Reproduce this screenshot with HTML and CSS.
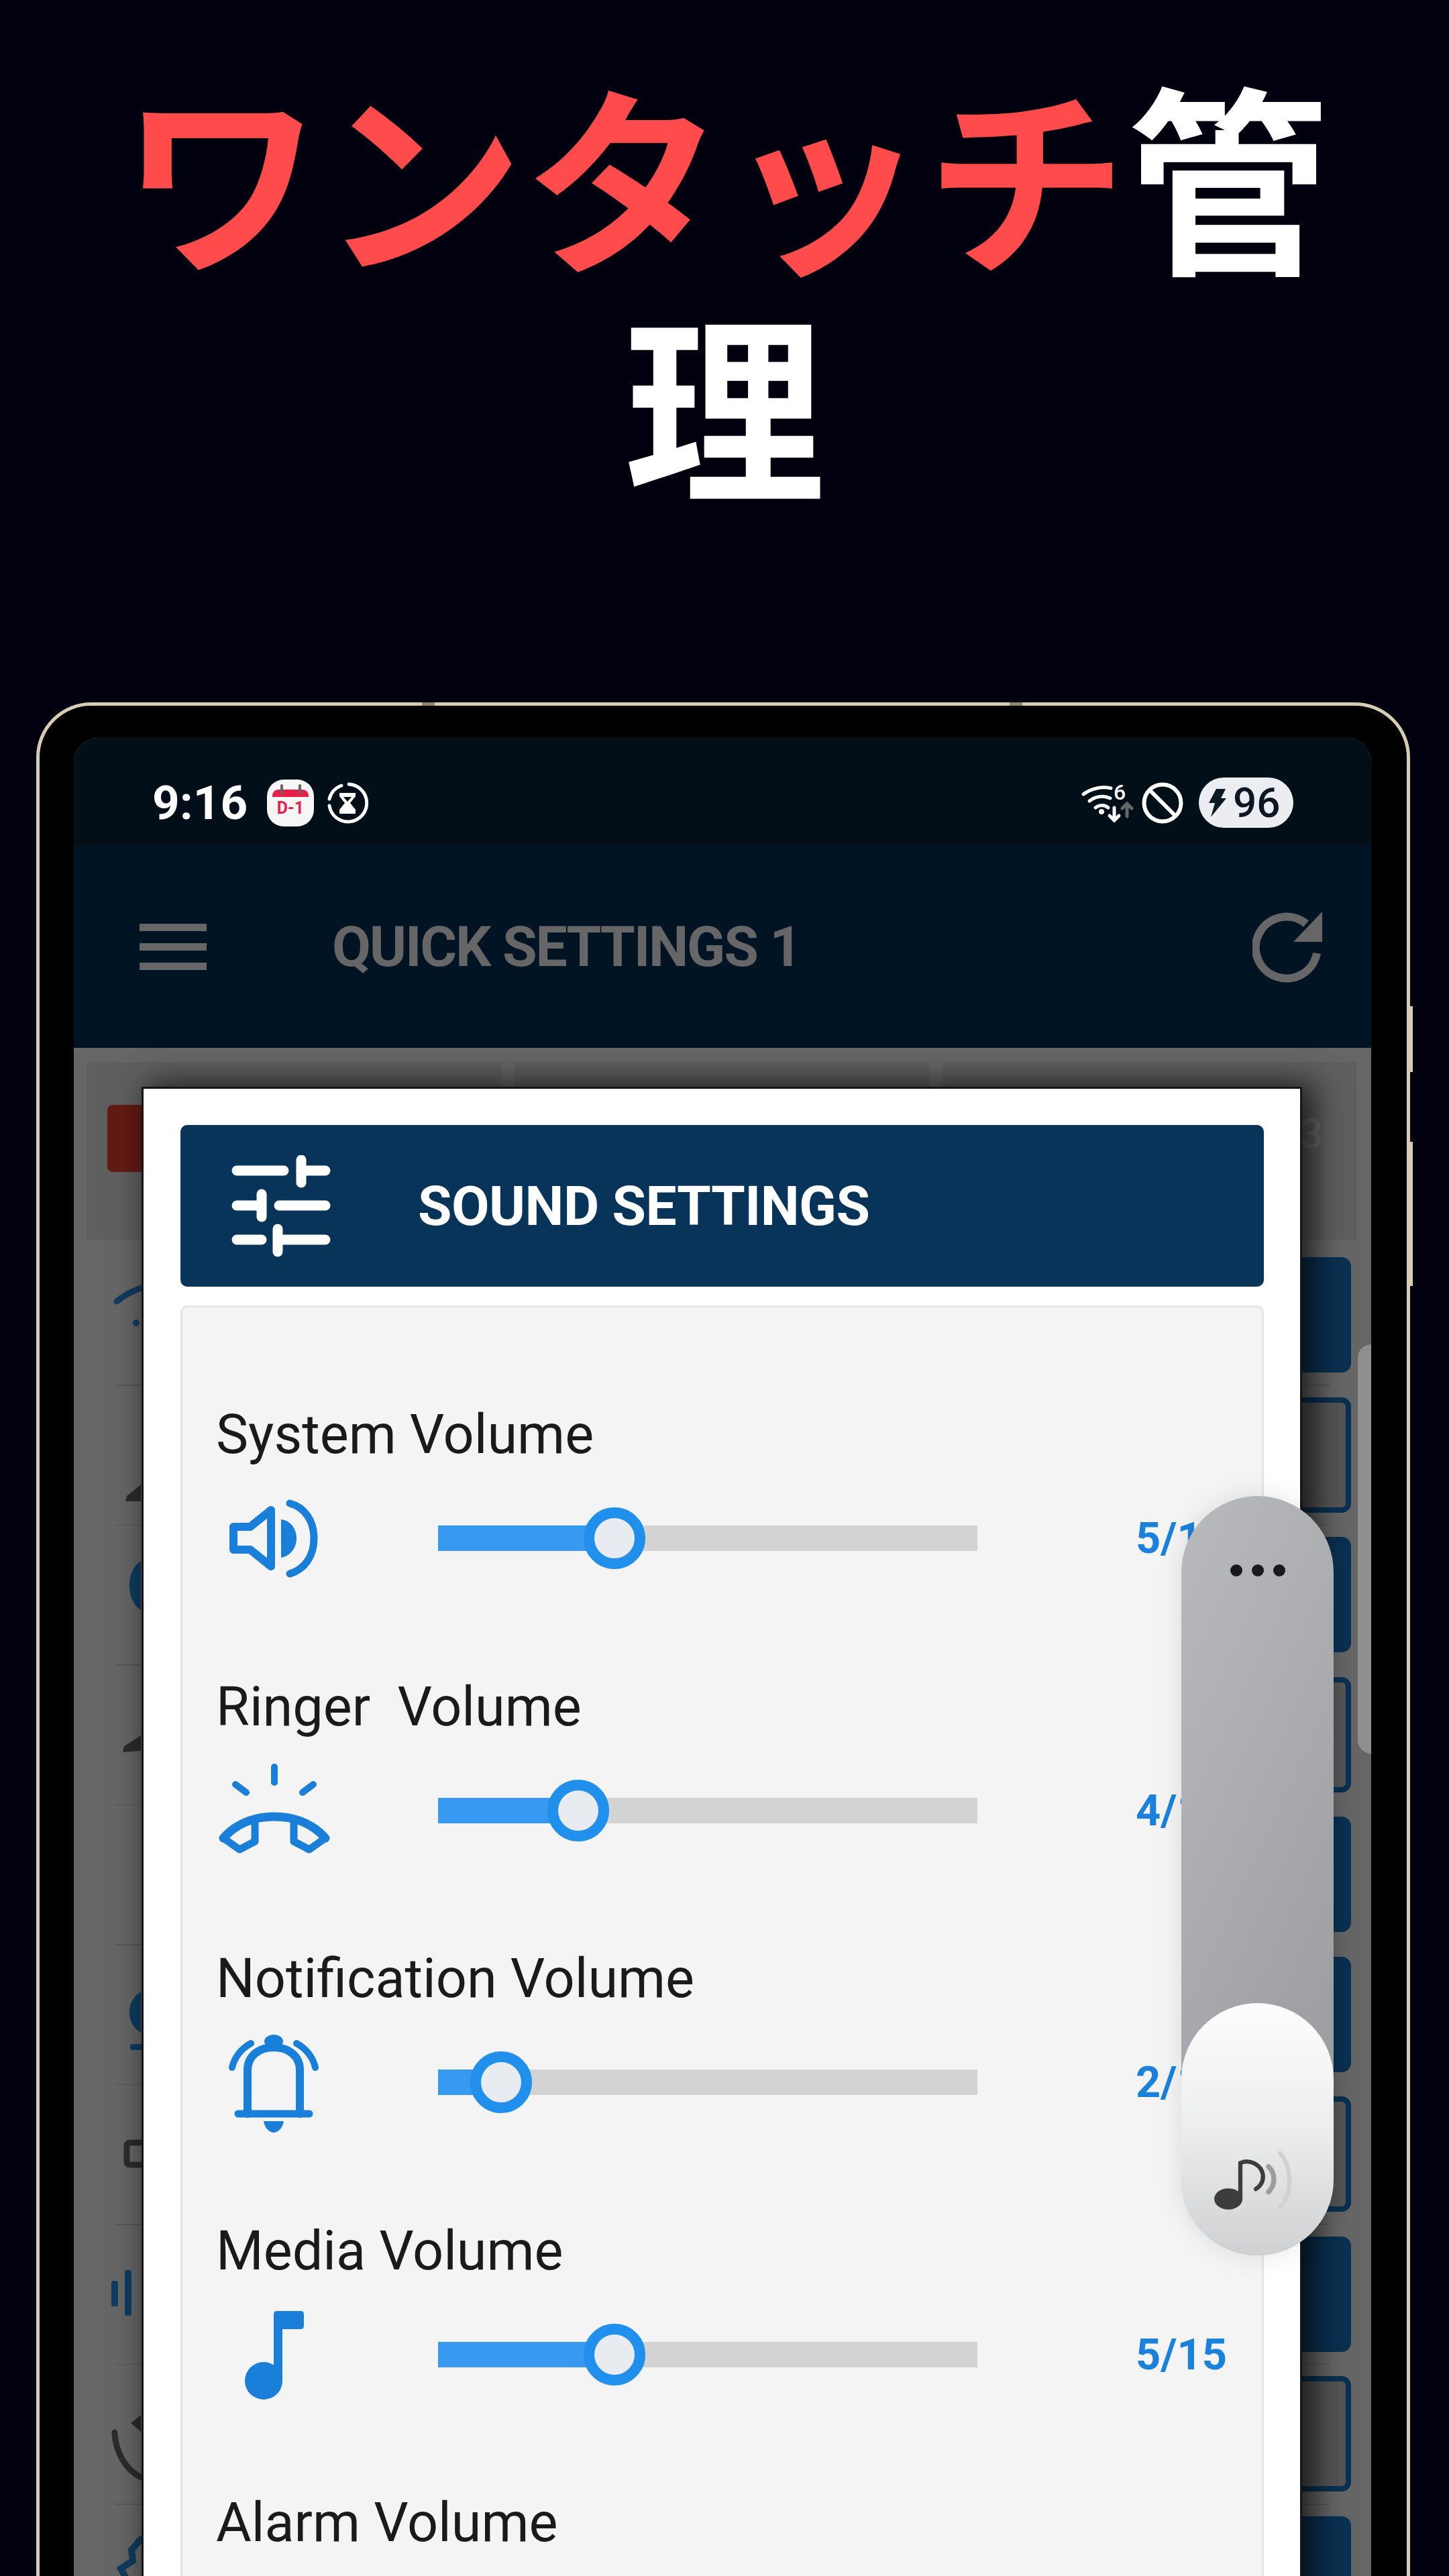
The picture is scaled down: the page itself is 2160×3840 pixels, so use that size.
FILE: index.html
```html
<!DOCTYPE html>
<html lang="ja">
<head>
    <meta charset="UTF-8">
    <title>ワンタッチ管理</title>
    <link rel="stylesheet" href="styles.css">
</head>
<body>
    <h1 class="headline"><span class="headline-red">ワンタッチ</span>管<br>理</h1>

    <div class="phone">
        <span class="seam seam-left"></span>
        <span class="seam seam-right"></span>
        <span class="side-key side-key-top"></span>
        <span class="side-key side-key-bottom"></span>

        <div class="screen">
            <div class="statusbar">
                <div class="status-left">
                    <span class="clock">9:16</span>
                    <svg class="ic-calendar" viewBox="0 0 70 70">
                        <rect x="0" y="0" width="70" height="70" rx="25" fill="#f6f6f6"/>
                        <path d="M8 26 V24 C8 19 12 15 17 15 H53 C58 15 62 19 62 24 V26 Z" fill="#ea1f49"/>
                        <path d="M22 9 V20 M49 9 V20" stroke="#666" stroke-width="4" stroke-linecap="round"/>
                        <text x="35" y="51" text-anchor="middle" class="ic-calendar-text">D-1</text>
                    </svg>
                    <svg class="ic-timer" viewBox="0 0 62 64">
                        <g fill="none" stroke="#fff" stroke-width="5" stroke-linecap="round">
                            <path d="M33 4 A28 28 0 1 1 4 36"/>
                            <path d="M4 26 A28 28 0 0 1 22 6"/>
                        </g>
                        <path d="M19 17 H43 V22 L35 32 L43 42 V48 H19 V42 L27 32 L19 22 Z" fill="#fff"/>
                        <path d="M25 23 H37 L31 30 Z" fill="#020f18"/>
                    </svg>
                </div>
                <div class="status-right">
                    <svg class="ic-wifi" viewBox="0 -8 78 68">
                        <g fill="none" stroke="#fff" stroke-width="5" stroke-linecap="round">
                            <path d="M3 17 C15 8 31 5 44 8"/>
                            <path d="M12 27 C21 20 33 18 43 23"/>
                            <path d="M21 37 C26 33 34 32 40 37"/>
                            <path d="M49 37 V55 M42 49 L49 56 L56 49"/>
                        </g>
                        <circle cx="30" cy="43" r="4" fill="#fff"/>
                        <path d="M68 50 V32 M61 38 L68 31 L75 38" fill="none" stroke="#666" stroke-width="5" stroke-linecap="round"/>
                        <text x="57" y="25" text-anchor="middle" class="ic-wifi-six">6</text>
                    </svg>
                    <svg class="ic-block" viewBox="0 0 62 64">
                        <circle cx="31" cy="32" r="27.5" fill="none" stroke="#fff" stroke-width="6"/>
                        <path d="M12 13 L50 51" stroke="#fff" stroke-width="6"/>
                    </svg>
                    <div class="battery">
                        <svg class="ic-bolt" viewBox="0 0 28 42">
                            <path d="M13 0 H27 L20 14 H28 L5 42 L11 21 H2 Z" fill="#0b1722"/>
                        </svg>
                        <span>96</span>
                    </div>
                </div>
            </div>

            <div class="appbar">
                <div class="hamburger"><i></i><i></i><i></i></div>
                <div class="appbar-title">QUICK SETTINGS 1</div>
                <svg class="ic-refresh" viewBox="0 0 104 106">
                    <path d="M80 18 A46 46 0 1 0 96 62" fill="none" stroke="#666" stroke-width="12"/>
                    <path d="M104 0 V45 H61 Z" fill="#666"/>
                </svg>
            </div>

            <div class="content">
                <div class="tabs">
                    <div class="tab"><span class="tab-red"></span></div>
                    <div class="tab"></div>
                    <div class="tab tab-last"><span class="tab-num">3</span></div>
                </div>

                <div class="list">
                    <div class="row">
                        <svg class="row-icon" viewBox="0 0 60 172">
                            <path d="M14 66 Q28 54 50 46" fill="none" stroke="#0f3c60" stroke-width="9" stroke-linecap="round"/>
                            <circle cx="43" cy="98" r="5" fill="#0f3c60"/>
                        </svg>
                        <div class="row-btn"></div>
                    </div>
                    <div class="row-line"></div>
                    <div class="row">
                        <svg class="row-icon" viewBox="0 0 60 172">
                            <path d="M27 155 L29 147 L50 130 V155 Z" fill="#2c2c2c"/>
                        </svg>
                        <div class="row-btn row-btn-outline"></div>
                    </div>
                    <div class="row-line"></div>
                    <div class="row">
                        <svg class="row-icon" viewBox="0 0 60 172">
                            <path d="M50 36 C27 50 27 95 50 109 Z" fill="#0f3c60"/>
                        </svg>
                        <div class="row-btn"></div>
                    </div>
                    <div class="row-line"></div>
                    <div class="row">
                        <svg class="row-icon" viewBox="0 0 60 172">
                            <path d="M23 112 L25 103 L50 87 V110 Z" fill="#2c2c2c"/>
                        </svg>
                        <div class="row-btn row-btn-outline"></div>
                    </div>
                    <div class="row-line"></div>
                    <div class="row">
                        <div class="row-btn"></div>
                    </div>
                    <div class="row-line"></div>
                    <div class="row">
                        <svg class="row-icon" viewBox="0 0 60 172">
                            <path d="M50 52 C27 66 27 100 50 113 Z" fill="#0f3c60"/>
                            <rect x="34" y="130" width="20" height="9" rx="4" fill="#0f3c60"/>
                        </svg>
                        <div class="row-btn"></div>
                    </div>
                    <div class="row-line"></div>
                    <div class="row">
                        <svg class="row-icon" viewBox="0 0 60 172">
                            <path d="M60 69 H34 Q29 69 29 74 V97 Q29 102 34 102 H60" fill="none" stroke="#2c2c2c" stroke-width="9"/>
                        </svg>
                        <div class="row-btn row-btn-outline"></div>
                    </div>
                    <div class="row-line"></div>
                    <div class="row">
                        <svg class="row-icon" viewBox="0 0 60 172">
                            <rect x="6" y="66" width="10" height="38" rx="3" fill="#0f3c60"/>
                            <rect x="26" y="50" width="10" height="68" rx="3" fill="#0f3c60"/>
                        </svg>
                        <div class="row-btn"></div>
                    </div>
                    <div class="row-line"></div>
                    <div class="row">
                        <svg class="row-icon" viewBox="0 0 60 172">
                            <path d="M11 84 C12 114 28 140 50 151" fill="none" stroke="#2c2c2c" stroke-width="9" stroke-linecap="round"/>
                            <path d="M35 70 L50 58 V83 Z" fill="#2c2c2c"/>
                        </svg>
                        <div class="row-btn row-btn-outline"></div>
                    </div>
                    <div class="row-line"></div>
                    <div class="row">
                        <svg class="row-icon" viewBox="0 0 60 172">
                            <path d="M50 34 L36 50 L38 66 L20 78 L28 92" fill="none" stroke="#0f3c60" stroke-width="10" stroke-linecap="round"/>
                        </svg>
                        <div class="row-btn"></div>
                    </div>
                </div>

                <div class="scrollbar"></div>

                <div class="dialog">
                    <div class="dialog-header">
                        <svg class="ic-sliders" viewBox="0 0 148 152">
                            <g stroke="#fff" stroke-width="15" stroke-linecap="round" fill="none">
                                <path d="M8 23 H78 M104 23 H140"/>
                                <path d="M8 75 H38 M71 75 H140"/>
                                <path d="M8 126 H45 M76 126 H140"/>
                                <path d="M104 7 V41" />
                                <path d="M45 58 V92" />
                                <path d="M69 110 V144" />
                            </g>
                        </svg>
                        <span class="dialog-title">SOUND SETTINGS</span>
                    </div>

                    <div class="panel">
                        <div class="volume">
                            <div class="volume-label">System Volume</div>
                            <div class="volume-row">
                                <svg class="vol-icon" viewBox="0 0 168 160">
                                    <path d="M23 63 H48 L79 38 V122 L48 97 H23 Z" fill="none" stroke="#1a7fd8" stroke-width="12" stroke-linejoin="round"/>
                                    <path d="M94 52 C110 54 117 68 117 80 C117 92 110 106 94 109 Z" fill="#1a7fd8"/>
                                    <path d="M107 28 C130 34 143 55 143 80 C143 106 130 126 107 133" fill="none" stroke="#1a7fd8" stroke-width="11" stroke-linecap="round"/>
                                </svg>
                                <div class="track">
                                    <div class="track-fill" style="width: 32.7%"></div>
                                    <div class="track-thumb" style="left: 32.7%"></div>
                                </div>
                                <div class="volume-value">5/15</div>
                            </div>
                        </div>

                        <div class="volume">
                            <div class="volume-label">Ringer&nbsp; Volume</div>
                            <div class="volume-row">
                                <svg class="vol-icon" viewBox="0 0 168 160">
                                    <g fill="none" stroke="#1a7fd8" stroke-linecap="round" stroke-linejoin="round">
                                        <path d="M84 15 V38 M26 41 L42 53 M142 41 L126 53" stroke-width="10"/>
                                        <path d="M8 121 C30 96 60 89 84 89 C108 89 138 96 160 121" stroke-width="13"/>
                                        <path d="M8 121 L32 138 L55 126 V96 M160 121 L136 138 L113 126 V96" stroke-width="11"/>
                                    </g>
                                </svg>
                                <div class="track">
                                    <div class="track-fill" style="width: 26%"></div>
                                    <div class="track-thumb" style="left: 26%"></div>
                                </div>
                                <div class="volume-value">4/15</div>
                            </div>
                        </div>

                        <div class="volume">
                            <div class="volume-label">Notification Volume</div>
                            <div class="volume-row">
                                <svg class="vol-icon" viewBox="0 0 168 160">
                                    <g fill="none" stroke="#1a7fd8" stroke-linecap="round">
                                        <path d="M44 127 V62 C44 40 62 28 83 28 C104 28 122 40 122 62 V127" stroke-width="12"/>
                                        <path d="M30 127 H136" stroke-width="11"/>
                                        <path d="M49 22 C34 30 24 44 21 58 M117 22 C132 30 142 44 145 58" stroke-width="10"/>
                                    </g>
                                    <ellipse cx="83" cy="19" rx="14" ry="10" fill="#1a7fd8"/>
                                    <path d="M68 138 H98 C96 150 88 155 83 155 C78 155 70 150 68 138 Z" fill="#1a7fd8"/>
                                </svg>
                                <div class="track">
                                    <div class="track-fill" style="width: 11.7%"></div>
                                    <div class="track-thumb" style="left: 11.7%"></div>
                                </div>
                                <div class="volume-value">2/15</div>
                            </div>
                        </div>

                        <div class="volume">
                            <div class="volume-label">Media Volume</div>
                            <div class="volume-row">
                                <svg class="vol-icon" viewBox="0 0 168 160">
                                    <ellipse cx="68" cy="119" rx="28" ry="28" fill="#1a7fd8"/>
                                    <path d="M83 20 Q83 15 88 15 H123 Q128 15 128 20 V37 Q128 42 123 42 H96 V119 H83 Z" fill="#1a7fd8"/>
                                </svg>
                                <div class="track">
                                    <div class="track-fill" style="width: 32.7%"></div>
                                    <div class="track-thumb" style="left: 32.7%"></div>
                                </div>
                                <div class="volume-value">5/15</div>
                            </div>
                        </div>

                        <div class="volume">
                            <div class="volume-label">Alarm Volume</div>
                        </div>
                    </div>
                </div>

                <div class="volume-pill">
                    <div class="pill-dots"><i></i><i></i><i></i></div>
                    <div class="pill-thumb">
                        <svg class="ic-note" viewBox="0 0 116 104">
                            <ellipse cx="21" cy="70" rx="20" ry="15" fill="#3d3d3f"/>
                            <path d="M38 70 V19 C52 13 68 22 70 36 C71 46 66 52 60 56" fill="none" stroke="#3d3d3f" stroke-width="6" stroke-linecap="round"/>
                            <path d="M78 24 C88 34 88 50 78 60" fill="none" stroke="#9c9d9f" stroke-width="7" stroke-linecap="round"/>
                            <path d="M94 5 C112 26 112 62 94 82" fill="none" stroke="#d0d1d3" stroke-width="6" stroke-linecap="round"/>
                        </svg>
                    </div>
                </div>
            </div>
        </div>
    </div>
</body>
</html>
```

FILE: styles.css
```css
* {
    box-sizing: border-box;
}
html, body {
    margin: 0;
    padding: 0;
}
body {
    width: 2160px;
    height: 3840px;
    overflow: hidden;
    background: #00000f;
    font-family: Roboto, "Noto Sans CJK JP", sans-serif;
}

/* headline */
.headline {
    margin: 0;
    height: 1047px;
    padding: 85px 90px 0;
    font-family: "Noto Sans CJK JP", "Noto Sans", sans-serif;
    font-size: 300px;
    line-height: 340px;
    font-weight: 700;
    color: #fff;
    text-align: center;
}
.headline-red {
    color: #ff4b4b;
}

/* phone frame */
.phone {
    position: relative;
    width: 2048px;
    height: 2900px;
    margin-left: 54px;
    padding: 48px 53px 0 51px;
    background: #000;
    border: 5px solid #d6cdb4;
    border-radius: 82px;
}
.seam {
    position: absolute;
    top: -5px;
    width: 19px;
    height: 5px;
    background: #8f8672;
}
.seam-left {
    left: 570px;
}
.seam-right {
    left: 1446px;
}
.side-key {
    position: absolute;
    right: -9px;
    width: 5px;
    background: #d6cdb4;
}
.side-key-top {
    top: 448px;
    height: 98px;
}
.side-key-bottom {
    top: 650px;
    height: 215px;
}
.screen {
    position: relative;
    height: 100%;
    overflow: hidden;
    border-radius: 36px 36px 0 0;
    background: #666;
}

/* status bar */
.statusbar {
    display: flex;
    justify-content: space-between;
    align-items: center;
    height: 161px;
    padding: 32px 116px 0 117px;
    background: #020f18;
}
.status-left, .status-right {
    display: flex;
    align-items: center;
}
.clock {
    width: 171px;
    font-size: 71px;
    font-weight: 700;
    color: #fff;
}
.ic-calendar {
    width: 70px;
    height: 70px;
}
.ic-calendar-text {
    font-family: Roboto, sans-serif;
    font-size: 25px;
    font-weight: 700;
    fill: #ea1f49;
}
.ic-timer {
    width: 62px;
    height: 64px;
    margin-left: 19px;
}
.ic-wifi {
    width: 78px;
    height: 68px;
    margin-bottom: 8px;
}
.ic-wifi-six {
    font-family: Roboto, sans-serif;
    font-size: 32px;
    font-weight: 500;
    fill: #fff;
}
.ic-block {
    width: 62px;
    height: 64px;
    margin-left: 12px;
}
.battery {
    display: flex;
    align-items: center;
    gap: 10px;
    width: 141px;
    height: 75px;
    margin-left: 23px;
    padding-left: 13px;
    border-radius: 38px;
    background: #ebedf0;
    font-size: 62px;
    font-weight: 500;
    color: #0b1722;
}
.ic-bolt {
    width: 28px;
    height: 42px;
}

/* app bar */
.appbar {
    display: flex;
    align-items: center;
    height: 301px;
    padding: 0 73px 0 98px;
    background: #011424;
}
.hamburger {
    display: flex;
    flex-direction: column;
    gap: 18px;
    width: 100px;
}
.hamburger i {
    display: block;
    height: 11px;
    background: #666;
}
.appbar-title {
    flex: 1;
    margin-left: 187px;
    font-size: 84px;
    font-weight: 700;
    letter-spacing: -2.2px;
    color: #666;
}
.ic-refresh {
    width: 104px;
    height: 106px;
}

/* dimmed page behind the dialog */
.content {
    position: relative;
    padding-top: 21px;
    background: #666;
}
.tabs {
    display: grid;
    grid-template-columns: 618px 618px 617px;
    column-gap: 20px;
    height: 265px;
    margin: 0 18px 9px 19px;
}
.tab {
    position: relative;
    padding-top: 64px;
    padding-left: 31px;
    background: #5f5f5f;
}
.tab-red {
    display: block;
    width: 100px;
    height: 100px;
    border-radius: 8px;
    background: #641a14;
}
.tab-last {
    padding-left: 0;
    padding-right: 50px;
    padding-top: 70px;
    text-align: right;
}
.tab-num {
    font-size: 62px;
    font-weight: 500;
    color: #6e6e6e;
}
.row {
    display: flex;
    justify-content: space-between;
    height: 207px;
    padding: 17px 30px 18px 50px;
}
.row-line {
    height: 1.5px;
    margin: 0 62px;
    background: #585858;
}
.row-icon {
    width: 60px;
    height: 172px;
}
.row-btn {
    width: 300px;
    height: 172px;
    margin-left: auto;
    border-radius: 14px;
    background: #0a3152;
}
.row-btn-outline {
    border: 8px solid #0a3152;
    background: #555;
}
.scrollbar {
    position: absolute;
    top: 442px;
    right: 0;
    width: 20px;
    height: 610px;
    border-radius: 20px 0 0 20px;
    background: #8f8f8f;
}

/* sound settings dialog */
.dialog {
    position: absolute;
    top: 61px;
    left: 104px;
    bottom: 0;
    width: 1724px;
    padding: 54px 54px 0 55px;
    background: #fff;
    box-shadow: 0 0 0 3px #151515, 14px 0 44px 8px rgba(0, 0, 0, 0.7);
}
.dialog-header {
    display: flex;
    align-items: center;
    height: 241px;
    padding-left: 76px;
    border-radius: 10px;
    background: #083459;
}
.ic-sliders {
    width: 148px;
    height: 152px;
}
.dialog-title {
    margin-left: 130px;
    font-size: 82px;
    font-weight: 700;
    letter-spacing: -0.5px;
    color: #fff;
}
.panel {
    margin-top: 28px;
    height: 2400px;
    padding: 143px 0 0 50px;
    border: 3px solid #e6e6e6;
    border-radius: 10px;
    background: #f4f4f4;
}
.volume {
    height: 405.5px;
}
.volume-label {
    font-size: 81px;
    line-height: 94px;
    color: #1a1a1a;
}
.volume-row {
    display: flex;
    align-items: center;
    margin-top: 27px;
    padding-right: 52px;
}
.vol-icon {
    width: 168px;
    height: 160px;
    margin-left: 3px;
    flex: none;
}
.track {
    position: relative;
    flex: none;
    width: 804px;
    height: 38px;
    margin-left: 160px;
    background: #d3d3d3;
}
.track-fill {
    height: 100%;
    background: #3899f0;
}
.track-thumb {
    position: absolute;
    top: 50%;
    width: 92px;
    height: 92px;
    margin: -46px 0 0 -46px;
    border: 16px solid #2090ec;
    border-radius: 50%;
    background: #e8ebf0;
}
.volume-value {
    flex: 1;
    font-size: 65px;
    font-weight: 700;
    color: #1a82dc;
    text-align: right;
}

/* floating volume pill */
.volume-pill {
    position: absolute;
    top: 668px;
    left: 1651px;
    width: 227px;
    height: 1132px;
    border-radius: 114px;
    background: linear-gradient(115deg, #b9babe, #96979b);
    box-shadow: 0 0 40px rgba(0, 0, 0, 0.1);
}
.pill-dots {
    display: flex;
    justify-content: center;
    gap: 14px;
    padding-top: 102px;
}
.pill-dots i {
    display: block;
    width: 18px;
    height: 18px;
    border-radius: 50%;
    background: #1a1a1c;
}
.pill-thumb {
    position: absolute;
    left: 0;
    right: 0;
    bottom: 0;
    height: 376px;
    padding: 218px 0 0 48px;
    border-radius: 114px;
    background: linear-gradient(180deg, #fdfdfd, #ecedee 50%, #cfd0d2);
}
.ic-note {
    display: block;
    width: 122px;
    height: 110px;
}
```
